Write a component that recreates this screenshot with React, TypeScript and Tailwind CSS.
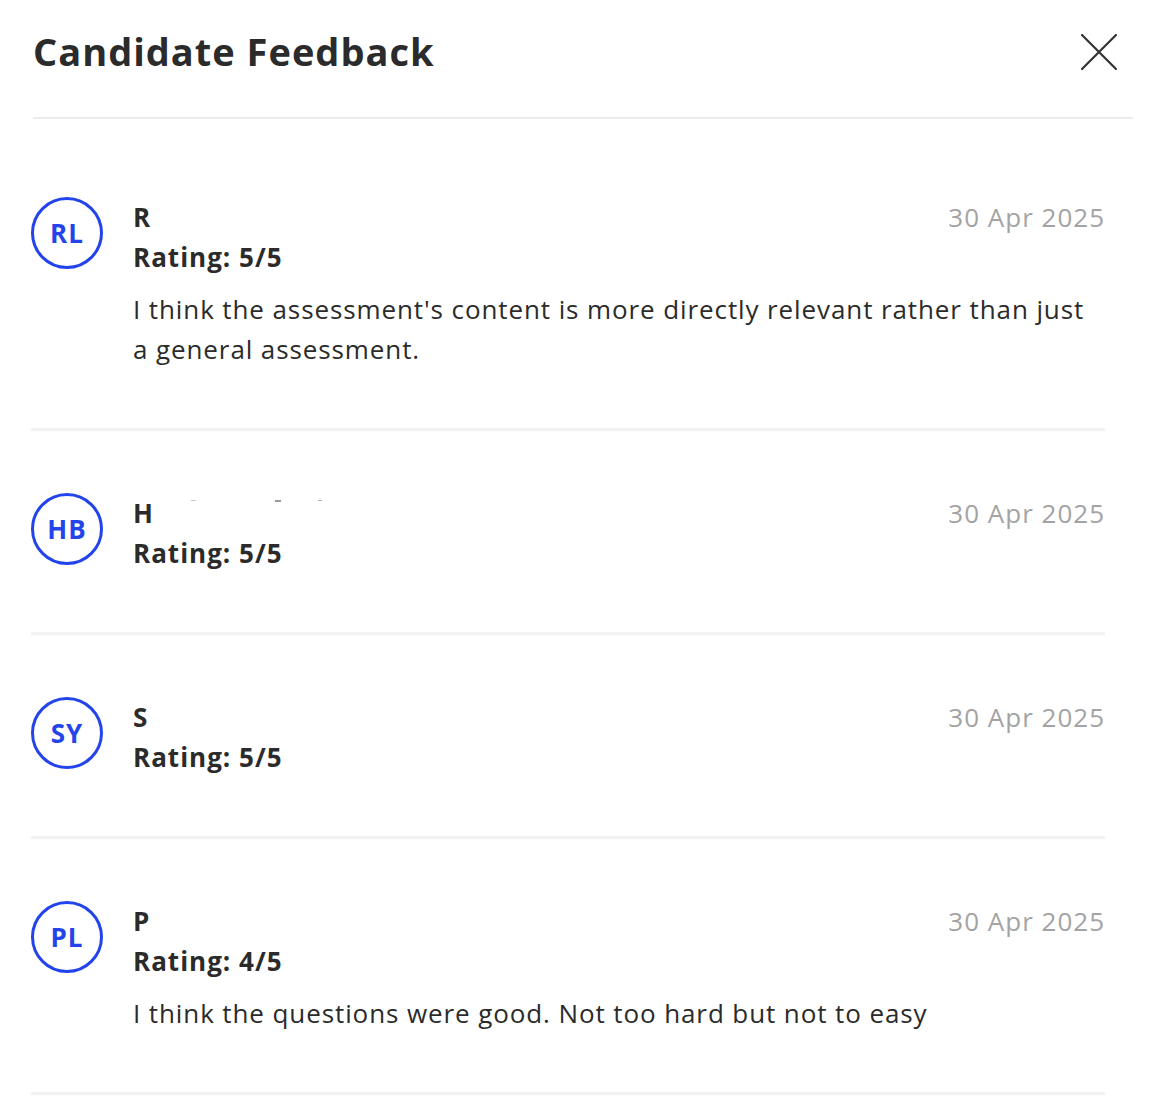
import React from "react";

type Feedback = {
  initials: string;
  name: string;
  rating: string;
  date: string;
  comment?: string;
  marks?: boolean;
};

const feedbacks: Feedback[] = [
  {
    initials: "RL",
    name: "R",
    rating: "5/5",
    date: "30 Apr 2025",
    comment:
      "I think the assessment's content is more directly relevant rather than just a general assessment.",
  },
  { initials: "HB", name: "H", rating: "5/5", date: "30 Apr 2025", marks: true },
  { initials: "SY", name: "S", rating: "5/5", date: "30 Apr 2025" },
  {
    initials: "PL",
    name: "P",
    rating: "4/5",
    date: "30 Apr 2025",
    comment: "I think the questions were good. Not too hard but not to easy",
  },
];

const CloseIcon = () => (
  <svg width="36" height="36" viewBox="0 0 36 36" fill="none">
    <path d="M1 1 L35 35 M35 1 L1 35" stroke="#333" strokeWidth="2.2" strokeLinecap="round" />
  </svg>
);

const FeedbackItem = ({ item }: { item: Feedback }) => {
  return (
    <div className="flex items-start pt-[62px] pb-[59px] border-b-[3px] border-[#f2f2f2] tracking-[1px]">
      <div className="w-[72px] h-[72px] rounded-full border-[3px] border-[#2444eb] flex items-center justify-center shrink-0">
        <span className="text-[26px] font-bold text-[#2444eb] leading-none">{item.initials}</span>
      </div>
      <div className="flex-1 ml-[30px]">
        <div className="flex justify-between items-start">
          <div className="flex flex-col">
            <div className="flex items-start">
              <p className="text-[26px] leading-[40px] font-bold text-[#2b2b2b]">{item.name}</p>
              {item.marks && (
                <>
                  <span className="mt-[7px] ml-[37px] w-[5px] h-[1px] bg-[#c8c8c8]" />
                  <span className="mt-[7px] ml-[79px] w-[6px] h-[2px] bg-[#9a9a9a]" />
                  <span className="mt-[7px] ml-[37px] w-[4px] h-[1px] bg-[#b0b0b0]" />
                </>
              )}
            </div>
            <p className="text-[26px] leading-[40px] font-bold text-[#2b2b2b]">
              Rating: {item.rating}
            </p>
          </div>
          <p className="text-[26px] leading-[40px] text-[#a3a3a3]">{item.date}</p>
        </div>
        {item.comment && (
          <p className="mt-[12px] text-[26px] leading-[40px] tracking-[0.9px] text-[#2b2b2b] pr-[10px]">
            {item.comment}
          </p>
        )}
      </div>
    </div>
  );
};

export default function App() {
  return (
    <div
      className="w-[1150px] min-h-[1104px] bg-white pl-[33px] pr-[17px]"
      style={{ fontFamily: '"Open Sans", "Liberation Sans", sans-serif' }}
    >
      <div className="flex items-center justify-between pt-[29px] pb-[44px] border-b-2 border-[#ececec]">
        <h1 className="text-[38px] leading-[44px] font-bold tracking-[1px] text-[#2b2b2b]">
          Candidate Feedback
        </h1>
        <button className="mr-[16px] mt-[2px]">
          <CloseIcon />
        </button>
      </div>
      <div className="ml-[-2px] mr-[28px] pt-[16px]">
        {feedbacks.map((f) => (
          <FeedbackItem key={f.initials} item={f} />
        ))}
      </div>
    </div>
  );
}
